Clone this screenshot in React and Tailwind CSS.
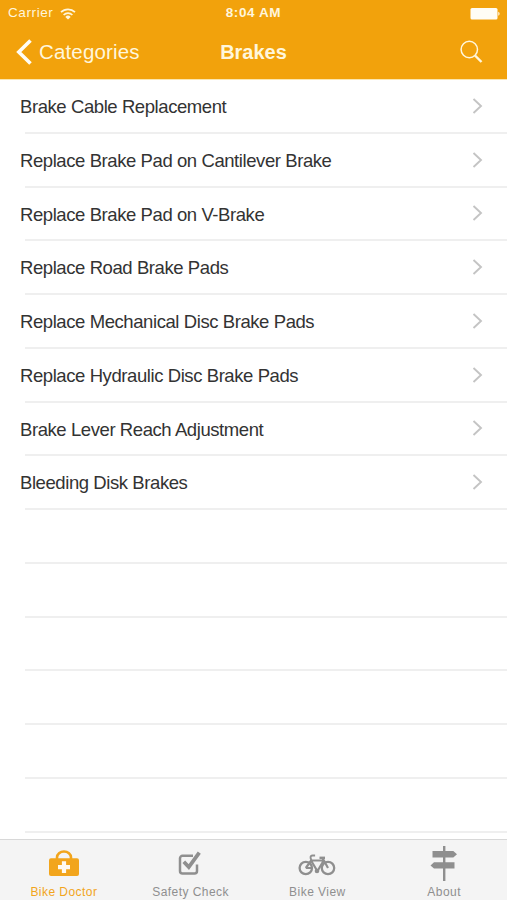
import { useState } from "react";

const guides = [
  "Brake Cable Replacement",
  "Replace Brake Pad on Cantilever Brake",
  "Replace Brake Pad on V-Brake",
  "Replace Road Brake Pads",
  "Replace Mechanical Disc Brake Pads",
  "Replace Hydraulic Disc Brake Pads",
  "Brake Lever Reach Adjustment",
  "Bleeding Disk Brakes",
];

// the table keeps drawing separators below the last guide
const emptyRows = [0, 1, 2, 3, 4, 5];

function WifiIcon() {
  return (
    <svg width="16" height="12" viewBox="0 0 16 12" fill="none" stroke="#fff6dc" strokeWidth="1.7">
      <path d="M1 4.2a10 10 0 0 1 14 0" />
      <path d="M3.6 7a6.3 6.3 0 0 1 8.8 0" />
      <path d="M8 11.6 5.3 8.9a3.9 3.9 0 0 1 5.4 0z" fill="#fff6dc" stroke="none" />
    </svg>
  );
}

function BatteryIcon() {
  return (
    <svg width="30" height="12" viewBox="0 0 30 12" fill="#fffdf5">
      <rect x="0.5" y="0" width="27" height="11.5" rx="1.5" />
      <path d="M28.3 3.8a2.2 2.2 0 0 1 0 4z" />
    </svg>
  );
}

function BagIcon() {
  return (
    <svg width="30" height="27" viewBox="0 0 30 27">
      <path d="M8 9V7.500a7 6 0 0 1 14 0V9" fill="none" stroke="currentColor" strokeWidth="2.600" />
      <rect x="0" y="8.300" width="30" height="17.700" rx="2" fill="currentColor" />
      <path d="M12.900 11.300h4.200v3.800h3.900v4.100h-3.900V23h-4.200v-3.800H9v-4.100h3.900z" fill="#fffaf0" />
    </svg>
  );
}

function CheckIcon() {
  return (
    <svg width="24" height="25" viewBox="0 0 24 25" fill="none" stroke="currentColor">
      <path d="M15 4.800H4.500a2.500 2.500 0 0 0-2.500 2.500V20a2.500 2.500 0 0 0 2.500 2.500H16.500a2.500 2.500 0 0 0 2.500-2.500V13.500" strokeWidth="2.500" />
      <path d="M5.800 10.700 10.800 16 21.300 1.700" strokeWidth="3.800" />
    </svg>
  );
}

function BikeIcon() {
  return (
    <svg width="38" height="22" viewBox="0 0 38 22" fill="none" stroke="currentColor">
      <circle cx="7.800" cy="14" r="6.200" strokeWidth="2.300" />
      <circle cx="30" cy="14" r="6.200" strokeWidth="2.300" />
      <path d="M7.800 14 13.500 6M13.500 6.500H25.500M13 6.500 19 16.500M19.500 17 26 6M24.500 4 30 14" strokeWidth="2.200" />
      <path d="M13.700 7 12.600 4q-.3-2.500 2-2.500h2.500" strokeWidth="1.900" />
      <path d="M21.500 3.800h5.500" strokeWidth="2.400" />
      <path d="M7.800 14h6" strokeWidth="2" />
      <circle cx="19" cy="17" r="2.300" fill="currentColor" stroke="none" />
    </svg>
  );
}

function SignIcon() {
  return (
    <svg width="28" height="36" viewBox="0 0 28 36" fill="currentColor">
      <path d="M13 0h2.400v35H13z" />
      <path d="M2.500 5h20.800l3.700 3.300-3.700 3.300H2.500zM24.500 16.200H4L.500 19.400 4 22.600h20.500z" />
    </svg>
  );
}

const tabs = [
  { label: "Bike Doctor", icon: BagIcon, iconClass: "pt-[3px] pl-[2px]" },
  { label: "Safety Check", icon: CheckIcon, iconClass: "pt-[3px]" },
  { label: "Bike View", icon: BikeIcon, iconClass: "pt-[5px]" },
  { label: "About", icon: SignIcon, iconClass: "pt-[3px]" },
];

function Header() {
  return (
    <header className="h-[80px] shrink-0 border-b border-[#fbe6b0] bg-[#f2a20c] text-[#fff6dc]">
      <div className="grid h-[27px] grid-cols-3 items-center px-[7px] text-[13px]">
        <div className="flex items-center gap-[7px] pl-px">
          <span className="text-[13.5px] tracking-[0.6px]">Carrier</span>
          <WifiIcon />
        </div>
        <span className="text-center text-[13.5px] font-bold tracking-[0.6px]">8:04 AM</span>
        <div className="flex justify-end">
          <BatteryIcon />
        </div>
      </div>
      <div className="grid h-[50px] grid-cols-3 items-center px-4">
        <button className="flex items-center gap-[7px] text-[20.5px] tracking-[0.15px]">
          <svg width="16" height="26" viewBox="0 0 16 26" fill="none" stroke="#fffdf5" strokeWidth="3.600">
            <path d="M14.500 1.500 2.800 13l11.700 11.500" />
          </svg>
          Categories
        </button>
        <h1 className="text-center text-[20px] font-bold">Brakes</h1>
        <button className="flex justify-end pr-2" aria-label="Search">
          <svg width="23" height="24" viewBox="0 0 23 24" fill="none" stroke="#fff6dc">
            <circle cx="9.300" cy="9.500" r="8.200" strokeWidth="1.500" />
            <path d="m15 15.500 6.500 6.500" strokeWidth="2.400" />
          </svg>
        </button>
      </div>
    </header>
  );
}

export default function App() {
  const [active, setActive] = useState("Bike Doctor");

  return (
    <div className="flex h-[900px] w-[507px] flex-col overflow-hidden bg-white font-['Liberation_Sans',Arial,sans-serif]">
      <Header />

      {/* GUIDES */}
      <ul className="min-h-0 flex-1 overflow-hidden">
        {guides.map((name) => (
          <li key={name} className="flex h-[53.75px] flex-col pl-[20px]">
            <div className="flex flex-1 items-center justify-between pr-6">
              <span className="pt-[2px] text-[18.5px] tracking-[-0.42px] whitespace-nowrap text-[#333]">{name}</span>
              <svg width="11" height="16" viewBox="0 0 11 16" fill="none" stroke="#c4c4c4" strokeWidth="1.900">
                <path d="m1.500 1 7.500 7-7.500 7" />
              </svg>
            </div>
            <div className="ml-[5px] h-[2px] bg-[#efefef]" />
          </li>
        ))}
        {emptyRows.map((n) => (
          <li key={n} className="flex h-[53.75px] flex-col justify-end pl-[25px]">
            <div className="h-[2px] bg-[#efefef]" />
          </li>
        ))}
      </ul>

      {/* TAB BAR */}
      <nav className="grid h-[61px] shrink-0 grid-cols-4 border-t border-[#d8d8d8] bg-[#f4f4f4]">
        {tabs.map(({ label, icon: Icon, iconClass }) => (
          <button
            key={label}
            onClick={() => setActive(label)}
            className={`flex flex-col items-center ${active === label ? "text-[#f2a51c]" : "text-[#8f8f8f]"}`}
          >
            <span className={`flex h-[44px] items-center justify-center ${iconClass}`}>
              <Icon />
            </span>
            <span className="pl-px text-[12px] leading-[16px] tracking-[0.45px]">{label}</span>
          </button>
        ))}
      </nav>
    </div>
  );
}
